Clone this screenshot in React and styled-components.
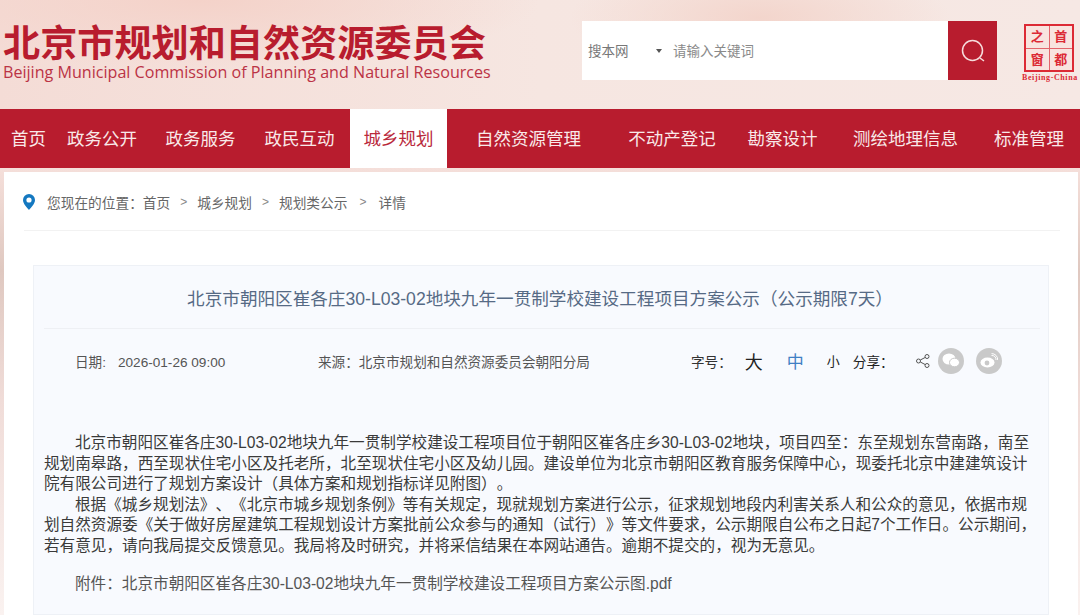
import React from 'react';
import styled, { createGlobalStyle } from 'styled-components';

const NAV_ITEMS = [
  { label: '首页', width: 57 },
  { label: '政务公开', width: 90 },
  { label: '政务服务', width: 107 },
  { label: '政民互动', width: 96, inset: 5 },
  { label: '城乡规划', width: 97, active: true },
  { label: '自然资源管理', width: 163 },
  { label: '不动产登记', width: 124 },
  { label: '勘察设计', width: 97 },
  { label: '测绘地理信息', width: 149 },
  { label: '标准管理', width: 98 },
];

const CRUMBS = ['首页', '城乡规划', '规划类公示', '详情'];

const GlobalStyle = createGlobalStyle`
  html, body {
    margin: 0;
    padding: 0;
    height: 615px;
    overflow: hidden;
    background: #f5e6e3;
  }
  * { box-sizing: border-box; }
  body {
    font-family: "Liberation Sans", "Noto Sans CJK SC", sans-serif;
    text-spacing-trim: space-all;
  }
`;

const Page = styled.div`
  width: 1080px;
  height: 615px;
  overflow: hidden;
  background: linear-gradient(180deg, #f5dfda 168px, #dfc8c0 270px, #f0dcd8 400px, #faf2f0 615px);
`;

const Header = styled.header`
  height: 109px;
  display: flex;
  align-items: flex-start;
  padding-left: 3px;
  background:
    radial-gradient(ellipse 190px 60px at 760px 18px, #f3d5cc 0%, rgba(243, 213, 204, 0) 100%),
    radial-gradient(ellipse 340px 70px at 200px 0, #f4d2c9 0%, rgba(244, 210, 201, 0) 100%),
    linear-gradient(90deg, #f4dcd6 0%, #f6e6e1 50%, #f6e8e4 100%);
`;

const Brand = styled.div`
  width: 579px;
  padding-top: 24px;
`;

const BrandName = styled.h1`
  margin: 0;
  font-size: 37.15px;
  line-height: 40px;
  font-weight: 700;
  color: #b81c2e;
  white-space: nowrap;
`;

const BrandEnglish = styled.div`
  font-family: "Open Sans", "Liberation Sans", sans-serif;
  font-size: 16.13px;
  line-height: 17px;
  color: #bb3345;
  white-space: nowrap;
`;

const Search = styled.div`
  width: 415px;
  height: 59px;
  margin-top: 21px;
  display: flex;
  align-items: center;
  background: #fff;
  font-size: 13.5px;
  color: #777;
`;

const SearchScope = styled.span`
  width: 74px;
  padding: 0 0 2px 6px;
`;

const SearchCaret = styled.span`
  width: 0;
  height: 0;
  border-left: 3px solid transparent;
  border-right: 3px solid transparent;
  border-top: 4px solid #555;
  margin-right: 11px;
`;

const SearchHint = styled.span`
  flex: 1;
  padding-bottom: 2px;
  color: #8a8a8a;
`;

const SearchButton = styled.div`
  width: 49px;
  height: 59px;
  background: #b81c2e;
  display: flex;
  align-items: center;
  justify-content: center;
`;

const Seal = styled.div`
  margin: 24px 0 0 25px;
  width: 56px;
`;

const SealBox = styled.div`
  width: 50px;
  height: 48px;
  margin-left: 2px;
  border: 2px solid #dc2a35;
  display: grid;
  grid-template-columns: 1fr 1fr;
  grid-template-rows: 1fr 1fr;
  gap: 1px;
  background: #e2656c;
  color: #dc2a35;
  font-size: 13px;
  font-weight: 700;
  line-height: 21px;
  text-align: center;
`;

const SealCell = styled.span`
  background: #f8e4df;
`;

const SealCaption = styled.div`
  font-family: "Liberation Serif", serif;
  font-size: 8px;
  font-weight: 700;
  letter-spacing: 0.6px;
  line-height: 10px;
  margin-top: 1px;
  color: #dc2a35;
  white-space: nowrap;
`;

const Nav = styled.nav`
  height: 59px;
  display: flex;
  background: #b81c2e;
`;

const NavItem = styled.a`
  width: ${({ $width }) => $width}px;
  padding: 0 ${({ $inset }) => $inset || 0}px 2px 0;
  display: flex;
  align-items: center;
  justify-content: center;
  font-size: 17.5px;
  white-space: nowrap;
  background: ${({ $active }) => ($active ? '#fff' : 'transparent')};
  color: ${({ $active }) => ($active ? '#b9293b' : '#f9e9e9')};
`;

const Sheet = styled.main`
  width: 1074px;
  height: 443px;
  margin: 4px 0 0 4px;
  background: #fff;
  padding: 0 18px 0 20px;
`;

const Breadcrumb = styled.div`
  height: 59px;
  padding-top: 2px;
  display: flex;
  align-items: center;
  font-size: 13.7px;
  color: #666;
  border-bottom: 1px solid #f2f2f2;
`;

const PinWrap = styled.span`
  display: flex;
  width: 23px;
  margin-left: -1px;
  margin-right: 1px;
`;

const CrumbLink = styled.span`
  white-space: nowrap;
`;

const CrumbSep = styled.span`
  width: ${({ $wide }) => ($wide ? 31 : 27)}px;
  text-align: center;
  color: #888;
  font-size: 12px;
`;

const Article = styled.article`
  width: 1016px;
  margin: 34px 0 0 9px;
  height: 350px;
  background: #f8fafe;
  border: 1px solid #eef1f6;
  padding: 0 8px 0 10px;
`;

const ArticleTitle = styled.h2`
  margin: 0;
  height: 63px;
  padding-right: 4px;
  display: flex;
  align-items: center;
  justify-content: center;
  font-size: 17.6px;
  font-weight: 400;
  color: #566a85;
  border-bottom: 1px solid #eef0f4;
  white-space: nowrap;
`;

const MetaRow = styled.div`
  height: 63px;
  display: flex;
  align-items: center;
  padding-left: 31px;
  font-size: 13.6px;
  color: #555;
`;

const MetaDate = styled.span`
  width: 243px;
  white-space: nowrap;
`;

const MetaDateValue = styled.span`
  margin-left: 12px;
  font-size: 13.6px;
`;

const MetaSource = styled.span`
  width: 373px;
  white-space: nowrap;
`;

const MetaLabel = styled.span`
  color: #333;
  white-space: nowrap;
`;

const SizeOption = styled.span`
  font-size: ${({ $size }) => $size}px;
  color: ${({ $current }) => ($current ? '#3f7fc4' : '#222')};
  margin-left: ${({ $gap }) => $gap}px;
  white-space: nowrap;
`;

const ShareIcon = styled.svg`
  margin-left: 21px;
  flex: none;
`;

const ShareCircle = styled.span`
  width: 26px;
  height: 26px;
  border-radius: 50%;
  background: #c9c9c9;
  display: flex;
  align-items: center;
  justify-content: center;
  flex: none;
  margin-left: ${({ $gap }) => $gap}px;
`;

const Body = styled.div`
  margin-top: 41px;
  font-size: 15.62px;
  line-height: 20.6px;
  color: #3a3a3a;
`;

const Para = styled.p`
  margin: 0;
  text-indent: 31px;
`;

const Attachment = styled.p`
  margin: 17px 0 0;
  text-indent: 31px;
  white-space: nowrap;
  color: #555;
`;

const App = () => (
  <Page>
    <GlobalStyle />
    <Header>
      <Brand>
        <BrandName>北京市规划和自然资源委员会</BrandName>
        <BrandEnglish>Beijing Municipal Commission of Planning and Natural Resources</BrandEnglish>
      </Brand>
      <Search>
        <SearchScope>搜本网</SearchScope>
        <SearchCaret />
        <SearchHint>请输入关键词</SearchHint>
        <SearchButton>
          <svg width="26" height="26" viewBox="0 0 26 26" fill="none" stroke="#f6dcdc" strokeWidth="1.5">
            <circle cx="12.5" cy="12.5" r="10" />
            <path d="M20 20l4 3" />
          </svg>
        </SearchButton>
      </Search>
      <Seal>
        <SealBox>
          <SealCell>之</SealCell>
          <SealCell>首</SealCell>
          <SealCell>窗</SealCell>
          <SealCell>都</SealCell>
        </SealBox>
        <SealCaption>Beijing-China</SealCaption>
      </Seal>
    </Header>
    <Nav>
      {NAV_ITEMS.map((item) => (
        <NavItem key={item.label} $width={item.width} $inset={item.inset} $active={item.active}>
          {item.label}
        </NavItem>
      ))}
    </Nav>
    <Sheet>
      <Breadcrumb>
        <PinWrap>
          <svg width="12" height="16" viewBox="0 0 12 16">
            <path
              fill="#1478c0"
              fillRule="evenodd"
              d="M6 0a6 6 0 0 1 6 6c0 3.8-4 7.6-6 10C4 13.6 0 9.8 0 6a6 6 0 0 1 6-6zm0 3.4a2.6 2.6 0 1 0 0 5.2 2.6 2.6 0 0 0 0-5.2z"
            />
          </svg>
        </PinWrap>
        <CrumbLink>您现在的位置：</CrumbLink>
        {CRUMBS.map((crumb, i) => (
          <React.Fragment key={crumb}>
            {i > 0 && <CrumbSep $wide={i === 3}>&gt;</CrumbSep>}
            <CrumbLink>{crumb}</CrumbLink>
          </React.Fragment>
        ))}
      </Breadcrumb>
      <Article>
        <ArticleTitle>北京市朝阳区崔各庄30-L03-02地块九年一贯制学校建设工程项目方案公示（公示期限7天）</ArticleTitle>
        <MetaRow>
          <MetaDate>
            日期:
            <MetaDateValue>2026-01-26 09:00</MetaDateValue>
          </MetaDate>
          <MetaSource>来源：北京市规划和自然资源委员会朝阳分局</MetaSource>
          <MetaLabel>字号：</MetaLabel>
          <SizeOption $size={18} $gap={13}>大</SizeOption>
          <SizeOption $size={17} $gap={24} $current>中</SizeOption>
          <SizeOption $size={13} $gap={23}>小</SizeOption>
          <SizeOption $size={13.6} $gap={13}>分享：</SizeOption>
          <ShareIcon width="16" height="16" viewBox="0 0 16 16" fill="none" stroke="#555" strokeWidth="1">
            <circle cx="12" cy="3.5" r="2" />
            <circle cx="3.5" cy="8" r="2" />
            <circle cx="12" cy="12.5" r="2" />
            <path d="M5.3 7l5-2.6M5.3 9l5 2.6" />
          </ShareIcon>
          <ShareCircle $gap={7}>
            <svg width="18" height="15" viewBox="0 0 18 15" fill="#fff">
              <ellipse cx="7" cy="6" rx="6.5" ry="5.5" />
              <ellipse cx="12.5" cy="9.5" rx="5" ry="4.3" stroke="#c9c9c9" strokeWidth="1" />
            </svg>
          </ShareCircle>
          <ShareCircle $gap={12}>
            <svg width="18" height="15" viewBox="0 0 18 15">
              <ellipse cx="7.5" cy="9.5" rx="7" ry="5" fill="#fff" />
              <circle cx="7" cy="10" r="2.4" fill="#c9c9c9" />
              <path d="M11.5 2.5a4 4 0 0 1 4.5 4.5M11.5 .6a6 6 0 0 1 6.2 6.4" fill="none" stroke="#fff" strokeWidth="1" />
            </svg>
          </ShareCircle>
        </MetaRow>
        <Body>
          <Para>北京市朝阳区崔各庄30-L03-02地块九年一贯制学校建设工程项目位于朝阳区崔各庄乡30-L03-02地块，项目四至：东至规划东营南路，南至规划南皋路，西至现状住宅小区及托老所，北至现状住宅小区及幼儿园。建设单位为北京市朝阳区教育服务保障中心，现委托北京中建建筑设计院有限公司进行了规划方案设计（具体方案和规划指标详见附图）。</Para>
          <Para>根据《城乡规划法》、《北京市城乡规划条例》等有关规定，现就规划方案进行公示，征求规划地段内利害关系人和公众的意见，依据市规划自然资源委《关于做好房屋建筑工程规划设计方案批前公众参与的通知（试行）》等文件要求，公示期限自公布之日起7个工作日。公示期间，若有意见，请向我局提交反馈意见。我局将及时研究，并将采信结果在本网站通告。逾期不提交的，视为无意见。</Para>
          <Attachment>附件：北京市朝阳区崔各庄30-L03-02地块九年一贯制学校建设工程项目方案公示图.pdf</Attachment>
        </Body>
      </Article>
    </Sheet>
  </Page>
);

export default App;
